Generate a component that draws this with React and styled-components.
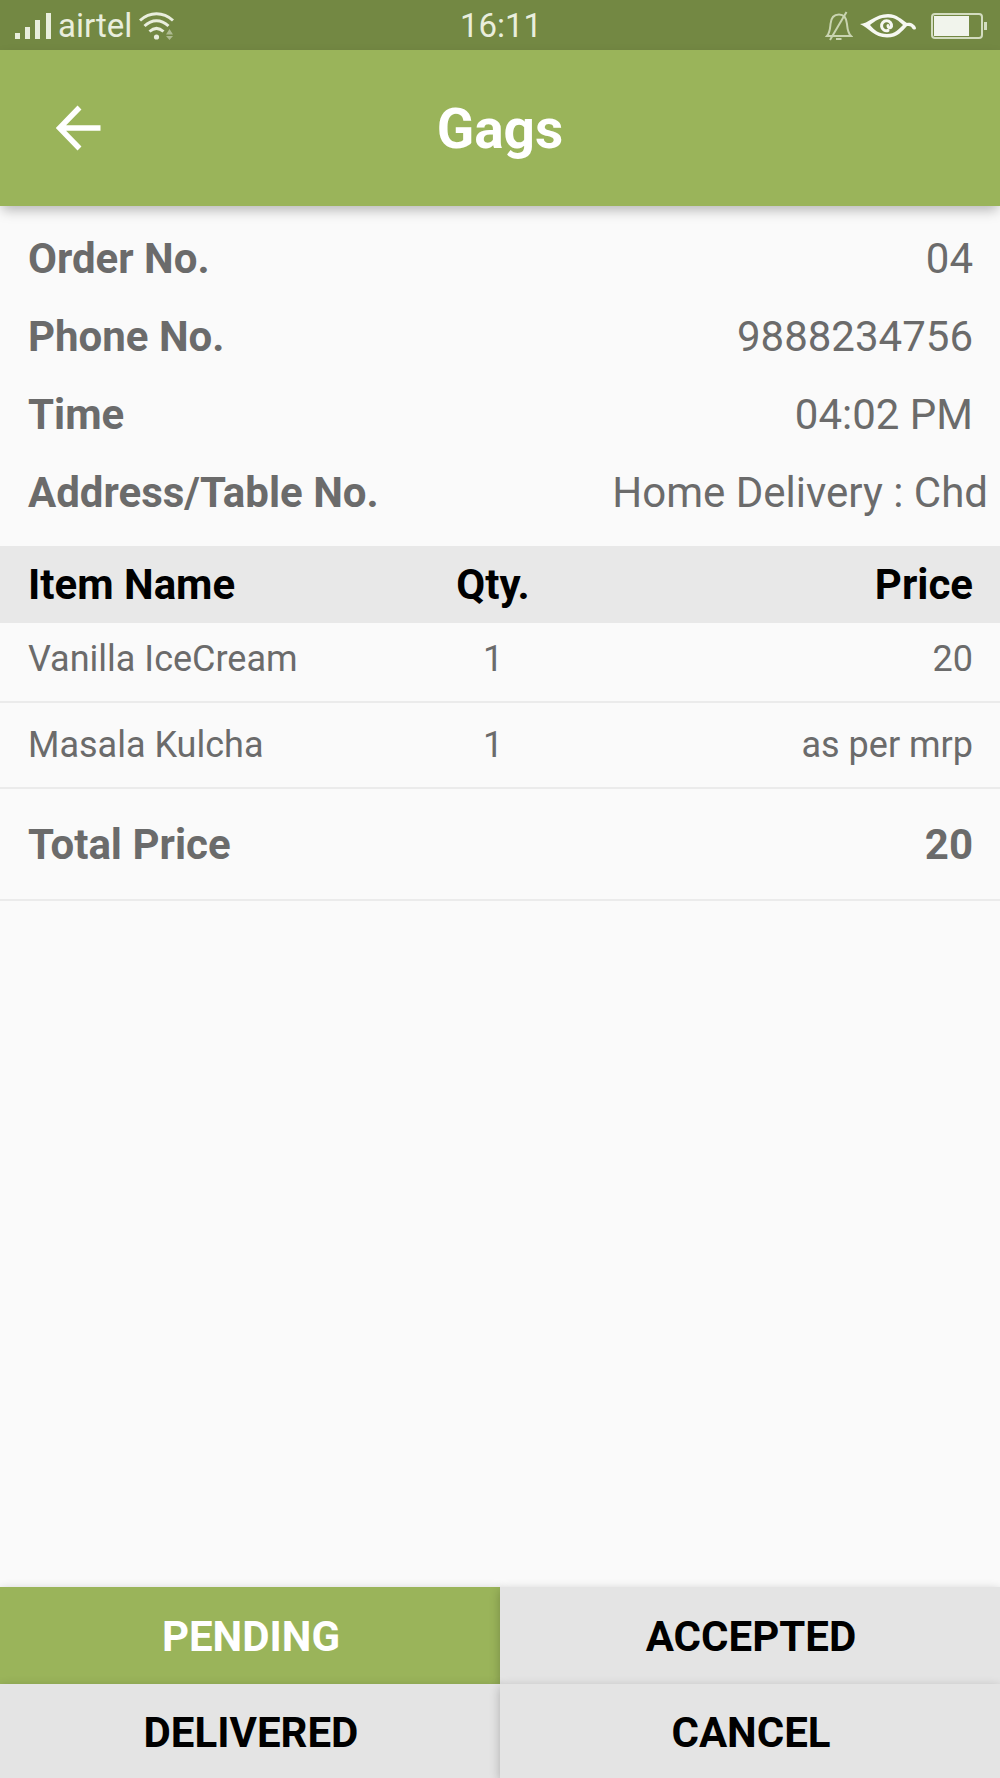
import styled, { createGlobalStyle } from "styled-components";

const details = [
    {label: 'Order No.', value: '04'},
    {label: 'Phone No.', value: '9888234756'},
    {label: 'Time', value: '04:02 PM'},
    {label: 'Address/Table No.', value: 'Home Delivery : Chd', wide: true}
];

const items = [
    {name: 'Vanilla IceCream', qty: '1', price: '20'},
    {name: 'Masala Kulcha', qty: '1', price: 'as per mrp'}
];

const statuses = ['PENDING', 'ACCEPTED', 'DELIVERED', 'CANCEL'];


const SignalIcon = () => (
    <svg width="36" height="26" viewBox="0 0 36 26" fill="currentColor" aria-hidden="true">
        <rect x="0" y="20" width="5" height="6"/>
        <rect x="10" y="14" width="5" height="12"/>
        <rect x="20" y="7" width="5" height="19"/>
        <rect x="31" y="0" width="5" height="26"/>
    </svg>
);

const WifiIcon = () => (
    <svg width="36" height="28" viewBox="0 0 36 28" fill="none" stroke="currentColor" strokeWidth="3" aria-hidden="true">
        <path d="M1 8.5C11 -.5 24 -.5 34 8.5"/>
        <path d="M5.5 14C13 7 22 7 29.5 14"/>
        <path d="M10.5 19.5C15 15.5 20 15.5 24.5 19.5"/>
        <circle cx="17.5" cy="25" r="2.6" fill="currentColor" stroke="none"/>
        <path d="M27 22.5L30.5 17L34 22.5ZM27 24L30.5 28L34 24Z" fill="currentColor" stroke="none" opacity=".5"/>
    </svg>
);

const BellOffIcon = () => (
    <svg width="28" height="30" viewBox="0 0 28 30" fill="none" stroke="currentColor" strokeWidth="2" aria-hidden="true">
        <path d="M2 25C5 21.5 5 18 5.5 13C6 7 9 3.5 14 3.5S21.5 7 22 13C22.5 18 22.5 21.5 26 25Z"/>
        <path d="M11 28H16.5"/>
        <path d="M21.5 1L5 29"/>
    </svg>
);

const EyeIcon = () => (
    <svg width="56" height="26" viewBox="0 0 56 26" fill="none" stroke="currentColor" strokeLinecap="round" aria-hidden="true">
        <path
            d="M0 11C8 11 15 1 28 1C37 1 42 7 47 10C50 9 55 11 56 15C56 17 53 17 52 15C51 13 49 13 47 13C42 18 38 24.5 27 24.5C14 24.5 9 15 0 11ZM10 12C14 17 19 21 27 21C35 21 39 16 43 12C39 8 35 4.5 28 4.5C20 4.5 15 8 10 12Z"
            fill="currentColor"
            fillRule="evenodd"
            stroke="none"
        />
        <path d="M28 17.5A5 5 0 1 1 31.5 13.5C31 15.5 28 15 28 12.5" strokeWidth="3"/>
    </svg>
);

const BatteryIcon = () => (
    <svg width="56" height="26" viewBox="0 0 56 26" aria-hidden="true">
        <rect x="1" y="1" width="50" height="24" rx="3" fill="none" stroke="#d3dcc0" strokeWidth="2"/>
        <rect x="3" y="3" width="35" height="20" fill="#f1f4ec"/>
        <rect x="53" y="9" width="3" height="8" fill="#d3dcc0"/>
    </svg>
);

const BackIcon = () => (
    <svg width="46" height="46" viewBox="0 0 46 46" fill="none" stroke="currentColor" strokeWidth="5.5" aria-hidden="true">
        <path d="M23.5 2.5L3.5 23L23.5 43.5M3.5 23H44.5"/>
    </svg>
);

const App = () => {
    return (
        <>
            <GlobalStyle/>
            <Page>
                <StatusBar>
                    <Carrier>
                        <SignalIcon/>
                        <span>airtel</span>
                        <WifiIcon/>
                    </Carrier>
                    <span>16:11</span>
                    <Indicators>
                        <BellOffIcon/>
                        <EyeIcon/>
                        <BatteryIcon/>
                    </Indicators>
                </StatusBar>

                <Header>
                    <BackButton type="button" aria-label="Back"><BackIcon/></BackButton>
                    <Title>Gags</Title>
                </Header>

                <Main>
                    <Details>
                        {details.map(detail => (
                            <Detail key={detail.label} $wide={detail.wide}>
                                <dt>{detail.label}</dt>
                                <dd>{detail.value}</dd>
                            </Detail>
                        ))}
                    </Details>

                    <ItemTable>
                        <thead>
                        <tr>
                            <th>Item Name</th>
                            <th>Qty.</th>
                            <th>Price</th>
                        </tr>
                        </thead>
                        <tbody>
                        {items.map(item => (
                            <tr key={item.name}>
                                <td>{item.name}</td>
                                <td>{item.qty}</td>
                                <td>{item.price}</td>
                            </tr>
                        ))}
                        </tbody>
                        <tfoot>
                        <tr>
                            <th colSpan={2}>Total Price</th>
                            <td>20</td>
                        </tr>
                        </tfoot>
                    </ItemTable>
                </Main>

                <Actions>
                    {statuses.map(status => (
                        <StatusButton key={status} type="button" $active={status === 'PENDING'}>{status}</StatusButton>
                    ))}
                </Actions>
            </Page>
        </>
    );
};


const GlobalStyle = createGlobalStyle`
  * {
    box-sizing: border-box;
  }

  body {
    margin: 0;
    background-color: #fafafa;
    color: #6b6b6b;
    font-family: Roboto, "Liberation Sans", sans-serif;
  }

  svg {
    display: block;
    flex: none;
  }
`

const Page = styled.div`
  display: flex;
  flex-direction: column;
  min-height: 100vh;
`

const StatusBar = styled.div`
  display: grid;
  grid-template-columns: 1fr auto 1fr;
  align-items: center;
  height: 50px;
  padding: 2px 13px 0 15px;
  background-color: #738843;
  color: #e9eedd;
  font-size: 33px;
  line-height: 48px;
`

const Carrier = styled.div`
  display: flex;
  align-items: center;
  gap: 7px;
`

const Indicators = styled.div`
  display: flex;
  align-items: center;
  justify-content: flex-end;
  gap: 7px;
  color: #f6f8f1;

  svg:first-child {
    color: #c9d4b0;
  }

  svg:last-child {
    margin-left: 8px;
  }
`

const Header = styled.header`
  display: grid;
  grid-template-columns: 1fr auto 1fr;
  align-items: center;
  height: 156px;
  padding: 0 56px;
  background-color: #9ab45a;
  color: #ffffff;
  box-shadow: 0 6px 12px -2px rgba(0, 0, 0, 0.28);
`

const BackButton = styled.button`
  justify-self: start;
  padding: 0;
  border: none;
  background: none;
  color: inherit;
  cursor: pointer;
`

const Title = styled.h1`
  margin: 0;
  padding-top: 2px;
  font-size: 55px;
  font-weight: 700;
`

const Main = styled.main`
  flex: 1;
`

const Details = styled.dl`
  margin: 0;
  padding: 14px 0;
`

const Detail = styled.div`
  display: flex;
  justify-content: space-between;
  padding: 0 ${props => props.$wide ? '12px' : '27px'} 0 28px;
  font-size: 42px;
  line-height: 78px;

  dt {
    font-weight: 700;
  }

  dd {
    margin: 0;
  }
`

const ItemTable = styled.table`
  width: 100%;
  border-collapse: separate;
  border-spacing: 0;
  table-layout: fixed;

  th, td {
    padding: 0 27px 0 28px;
    text-align: left;
  }

  th:nth-child(2), td:nth-child(2) {
    padding: 0 14px 0 0;
    text-align: center;
  }

  th:last-child, td:last-child {
    padding: 0 27px 0 0;
    text-align: right;
  }

  thead th {
    height: 77px;
    background-color: #e8e8e8;
    color: #000000;
    font-size: 42px;
    font-weight: 700;
  }

  tbody td {
    height: 86px;
    border-bottom: 2px solid #ebebeb;
    font-size: 36px;
  }

  tbody tr:first-child td {
    height: 80px;
    padding-bottom: 6px;
  }

  tfoot th, tfoot td {
    height: 112px;
    border-bottom: 2px solid #ebebeb;
    font-size: 42px;
    font-weight: 700;
  }

  tfoot td:last-child {
    padding: 0 27px 0 0;
    text-align: right;
  }
`

const Actions = styled.footer`
  display: grid;
  grid-template-columns: 1fr 1fr;
  grid-template-rows: 97px 94px;
`

const StatusButton = styled.button`
  padding: 2px 0 0 2px;
  border: none;
  background-color: ${props => props.$active ? '#9ab45a' : '#e4e4e4'};
  color: ${props => props.$active ? '#ffffff' : '#000000'};
  box-shadow: 0 3px 10px rgba(0, 0, 0, 0.24);
  font-family: inherit;
  font-size: 42px;
  font-weight: 700;
  cursor: pointer;
`

export default App;
